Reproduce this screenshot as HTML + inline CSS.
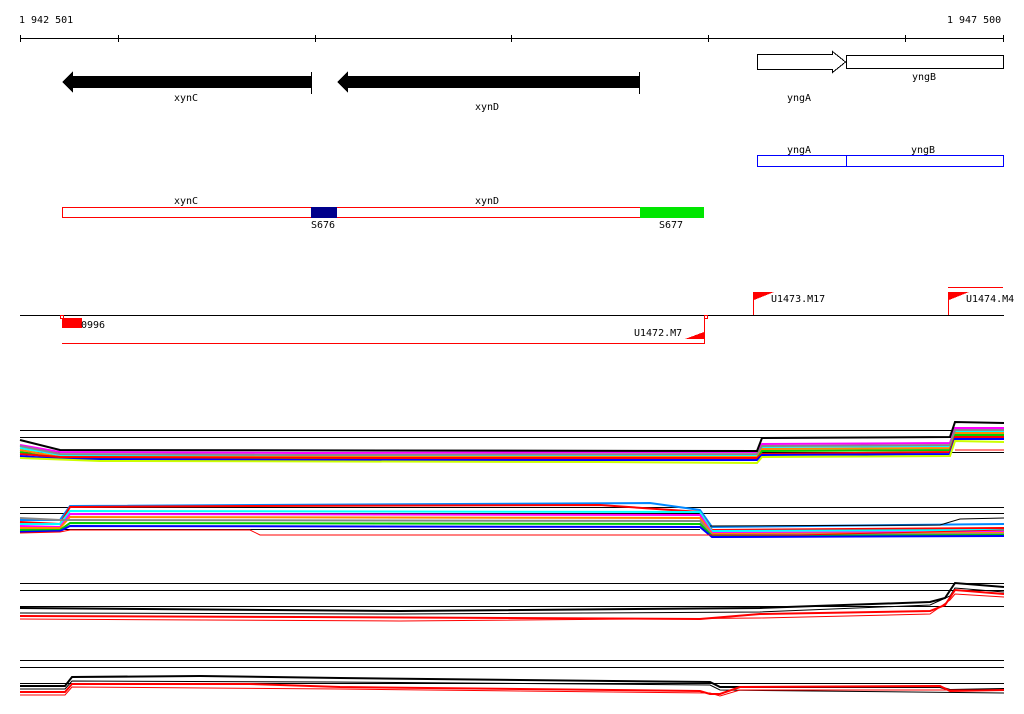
<!DOCTYPE html>
<html><head><meta charset="utf-8"><style>
html,body{margin:0;padding:0;background:#fff;width:1024px;height:714px;overflow:hidden}
svg{display:block}
text{font-family:"DejaVu Sans Mono","Liberation Mono",monospace;font-size:10px;fill:#000}
</style></head><body>
<svg width="1024" height="714" viewBox="0 0 1024 714" xmlns="http://www.w3.org/2000/svg" shape-rendering="crispEdges">
<!-- ruler -->
<text x="19" y="23">1 942 501</text>
<text x="947" y="23">1 947 500</text>
<line x1="20" y1="38.5" x2="1004" y2="38.5" stroke="#000"/>
<g stroke="#000">
<line x1="20.5" y1="35" x2="20.5" y2="42"/><line x1="118.5" y1="35" x2="118.5" y2="42"/>
<line x1="315.5" y1="35" x2="315.5" y2="42"/><line x1="511.5" y1="35" x2="511.5" y2="42"/>
<line x1="708.5" y1="35" x2="708.5" y2="42"/><line x1="905.5" y1="35" x2="905.5" y2="42"/>
<line x1="1003.5" y1="35" x2="1003.5" y2="42"/>
</g>
<!-- gene arrows -->
<polygon points="62,82 73,71 73,76 312,76 312,88 73,88 73,93" fill="#000"/>
<line x1="311.5" y1="72" x2="311.5" y2="94" stroke="#000"/>
<polygon points="337,82 348,71 348,76 640,76 640,88 348,88 348,93" fill="#000"/>
<line x1="639.5" y1="72" x2="639.5" y2="94" stroke="#000"/>
<text x="174" y="101">xynC</text>
<text x="475" y="110">xynD</text>
<polygon points="757.5,54.5 832.5,54.5 832.5,51.5 845.5,62 832.5,72.5 832.5,69.5 757.5,69.5" fill="#fff" stroke="#000"/>
<rect x="846.5" y="55.5" width="157" height="13" fill="#fff" stroke="#000"/>
<text x="787" y="101">yngA</text>
<text x="912" y="80">yngB</text>
<!-- blue boxes -->
<rect x="757.5" y="155.5" width="246" height="11" fill="#fff" stroke="#00f"/>
<line x1="846.5" y1="155" x2="846.5" y2="166" stroke="#00f"/>
<text x="787" y="153">yngA</text>
<text x="911" y="153">yngB</text>
<!-- red box -->
<rect x="62.5" y="207.5" width="641" height="10" fill="#fff" stroke="#f00"/>
<rect x="311" y="207" width="26" height="11" fill="#00008b"/>
<rect x="640" y="207" width="64" height="11" fill="#00e600" stroke="none"/>
<text x="174" y="204">xynC</text>
<text x="475" y="204">xynD</text>
<text x="311" y="228">S676</text>
<text x="659" y="228">S677</text>
<!-- transcription units -->
<line x1="20" y1="315.5" x2="1004" y2="315.5" stroke="#000"/>
<line x1="753.5" y1="292" x2="753.5" y2="315" stroke="#f00"/>
<polygon points="754,292 774,292 754,300" fill="#f00"/>
<text x="771" y="302">U1473.M17</text>
<line x1="948" y1="287.5" x2="1003" y2="287.5" stroke="#f00"/>
<line x1="948.5" y1="292" x2="948.5" y2="315" stroke="#f00"/>
<polygon points="949,292 969,292 949,300" fill="#f00"/>
<text x="966" y="302">U1474.M4</text>
<rect x="62" y="318" width="20" height="10" fill="#f00"/>
<rect x="60.5" y="315.5" width="3" height="3" fill="#fff" stroke="#f00"/>
<text x="81" y="328">0996</text>
<line x1="62" y1="343.5" x2="705" y2="343.5" stroke="#f00"/>
<rect x="704.5" y="315.5" width="3" height="3" fill="#fff" stroke="#f00"/>
<line x1="704.5" y1="318" x2="704.5" y2="343" stroke="#f00"/>
<polygon points="685,339 704,332 704,339" fill="#f00"/>
<text x="634" y="336">U1472.M7</text>
<!-- band 1 -->
<g stroke="#000"><line x1="20" y1="430.5" x2="1004" y2="430.5"/><line x1="20" y1="437.5" x2="1004" y2="437.5"/><line x1="20" y1="452.5" x2="1004" y2="452.5"/></g>
<g fill="none" stroke-width="2" shape-rendering="auto">
<polyline stroke="#f0f" points="20,445 60,452 300,453 757,452 762,444 950,443 955,428 1004,428"/>
<polyline stroke="#0ff" points="20,448 60,455 300,456 757,455 762,447 950,446 955,431 1004,431"/>
<polyline stroke="#f80" points="20,450 60,457 300,457 757,457 762,449 950,448 955,433 1004,433"/>
<polyline stroke="#0c0" points="20,452 60,459 300,458 757,459 762,451 950,450 955,435 1004,435"/>
<polyline stroke="#888" points="20,446 60,454 300,455 757,454 762,446 950,445 955,430 1004,430"/>
<polyline stroke="#f00" points="20,454 60,457 400,458 757,458 762,454 950,452 955,437 1004,437"/>
<polyline stroke="#00f" points="20,456 60,459 300,460 757,460 762,455 950,454 955,439 1004,439"/>
<polyline stroke="#cf0" points="20,458 100,461 600,462 757,463 762,457 950,456 955,441 1004,442"/>
<polyline stroke="#000" points="20,440 60,450 757,451 762,438 950,437 955,422 1004,423"/>
<polyline stroke="#f00" stroke-width="1" points="955,450 1004,450"/>
</g>
<!-- band 2 -->
<g stroke="#000"><line x1="20" y1="507.5" x2="1004" y2="507.5"/><line x1="20" y1="513.5" x2="1004" y2="513.5"/><line x1="20" y1="529.5" x2="700" y2="529.5"/></g>
<g fill="none" stroke-width="2" shape-rendering="auto">
<polyline stroke="#08f" points="20,520 60,520 70,506 650,503 700,510 712,527 1004,524"/>
<polyline stroke="#f00" points="20,522 60,524 70,507 250,506 600,505 700,512 712,530 1004,528"/>
<polyline stroke="#0ff" points="20,524 60,524 70,511 700,512 712,531 1004,530"/>
<polyline stroke="#f0f" points="20,526 60,527 70,514 700,515 712,533 1004,532"/>
<polyline stroke="#f80" points="20,528 60,528 70,517 700,518 712,534 1004,533"/>
<polyline stroke="#888" points="20,518 60,520 70,520 700,521 712,535 1004,534"/>
<polyline stroke="#0c0" points="20,530 60,530 70,523 700,524 712,536 1004,535"/>
<polyline stroke="#00f" points="20,532 60,531 70,526 700,527 712,537 1004,536"/>
<polyline stroke="#f00" stroke-width="1" points="20,533 60,532 70,530 250,530 260,535 800,535 1004,530"/>
<polyline stroke="#000" stroke-width="1" points="710,526 940,525 960,519 1004,518"/>
</g>
<!-- band 3 -->
<g stroke="#000"><line x1="20" y1="583.5" x2="1004" y2="583.5"/><line x1="20" y1="590.5" x2="1004" y2="590.5"/><line x1="20" y1="606.5" x2="1004" y2="606.5"/></g>
<g fill="none" shape-rendering="auto">
<polyline stroke="#000" stroke-width="2" points="20,608 400,611 760,608 930,602 945,598 955,583 1004,587"/>
<polyline stroke="#000" stroke-width="1" points="20,613 400,614 760,612 930,605 950,596 955,588 1004,592"/>
<polyline stroke="#f00" stroke-width="2" points="20,616 300,617 700,619 760,614 930,611 945,605 955,590 1004,594"/>
<polyline stroke="#f00" stroke-width="1" points="20,619 400,621 760,618 930,614 950,600 955,594 1004,597"/>
</g>
<!-- band 4 -->
<g stroke="#000"><line x1="20" y1="660.5" x2="1004" y2="660.5"/><line x1="20" y1="667.5" x2="1004" y2="667.5"/><line x1="20" y1="683.5" x2="1004" y2="683.5"/></g>
<g fill="none" shape-rendering="auto">
<polyline stroke="#000" stroke-width="2" points="20,686 65,686 72,677 200,676 340,678 710,682 720,687 940,687 950,690 1004,689"/>
<polyline stroke="#000" stroke-width="1" points="20,689 65,689 72,681 330,682 710,685 720,690 1004,693"/>
<polyline stroke="#f00" stroke-width="2" points="20,692 65,692 72,684 250,684 340,687 700,691 710,694 720,694 740,687 940,686 950,691 1004,690"/>
<polyline stroke="#f00" stroke-width="1" points="20,695 65,695 72,687 340,689 710,693 720,696 740,690 1004,690"/>
</g>
</svg>
</body></html>
